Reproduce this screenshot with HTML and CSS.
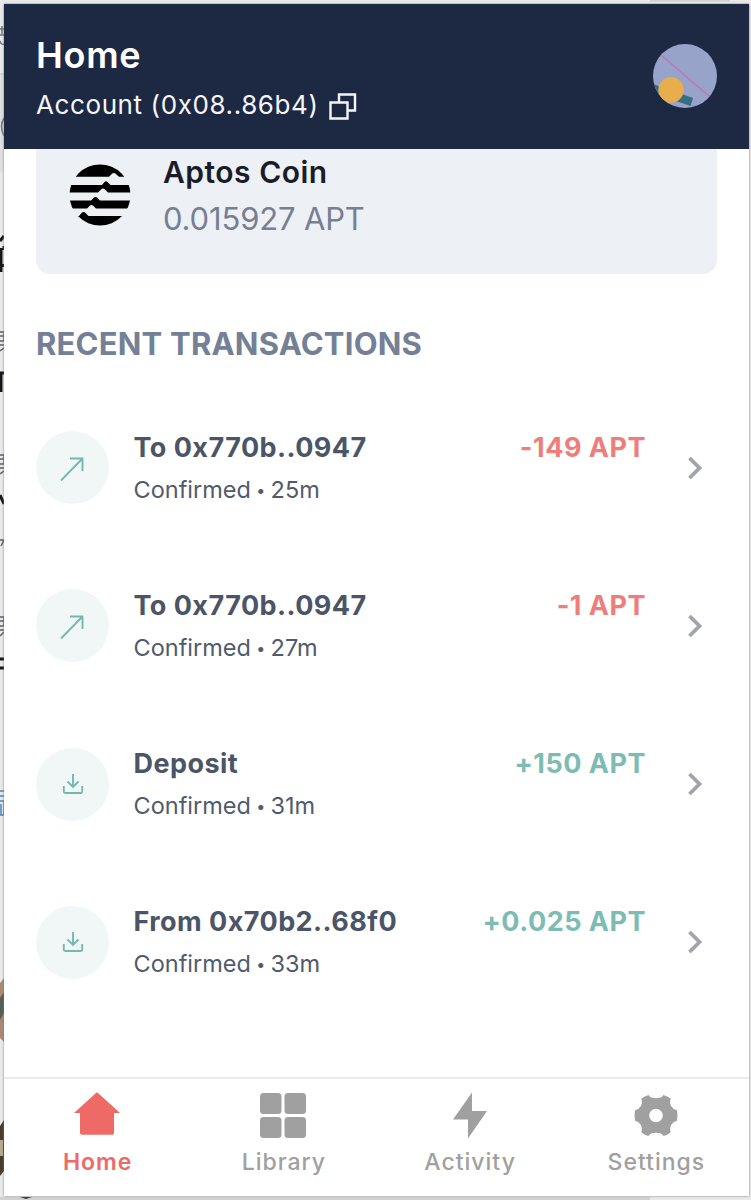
FILE: index.html
```
<!DOCTYPE html>
<html lang="en">
<head>
<meta charset="utf-8">
<title>Wallet</title>
<link rel="stylesheet" href="styles.css">
</head>
<body>
<svg class="backdrop" width="751" height="1200" viewBox="0 0 751 1200" aria-hidden="true">
  <path fill="#e9e9e9" d="M0 0H751V1200H0z"/>
  <path fill="#dedfe1" d="M0 75H4V172H0z"/>
  <path fill="#d2d2d2" d="M0 73H4V75H0zM650 0H730V1.500H650zM0 1197H650V1200H0z"/>
  <path stroke="#6c7078" stroke-width="1.500" fill="none" d="M0 29H4M2 26V34M0 35H4M0 41q1 4 4 3M4 118q-5 8 0 18"/>
  <path stroke="#16161a" stroke-width="3" fill="none" d="M0 241L4 236M1 248V272M4 246V250M3 264V267M0 373H4M1 373V392M0 495L4 504M0 659H4M4 668H0"/>
  <path stroke="#596069" stroke-width="1.500" fill="none" d="M0 332H4V341H0M0 336H4M0 345H4M0 351L4 348M0 455H4V464H0M0 459H4M0 468H4M0 474L4 471M0 617H4V626H0M0 621H4M0 630H4M0 636L4 632M0 540H4L1 546"/>
  <path stroke="#4c83c6" stroke-width="1.500" fill="none" d="M0 791H4M0 796H4M0 801H4V815H0M1 804V815"/>
  <path fill="#ad8973" d="M0 983L4 978V1042L0 1038z"/>
  <path fill="#555f57" d="M0 998L4 992V1013L0 1020z"/>
  <path fill="#493d2e" d="M0 1126L4 1120V1171L0 1176z"/>
  <path fill="#b9a890" d="M0 1140H3V1156H0z"/>
  <path fill="#42372d" d="M20 1197H32L26 1199z"/>
</svg>
<div class="app">
  <header class="header">
    <div class="heading">
      <h1 class="title">Home</h1>
      <div class="account"><span>Account (0x08..86b4)</span>
        <svg class="copy" width="28" height="28" viewBox="0 0 28 28" fill="none" stroke="#f4f6fa" stroke-width="2.400"><path d="M10 10V2.500H26V18.500H19M1.500 10.500H18.500V26.500H1.500z"/></svg>
      </div>
    </div>
    <svg class="avatar" width="64" height="64" viewBox="0 0 64 64">
      <defs><clipPath id="disc"><circle cx="32" cy="32" r="32"/></clipPath></defs>
      <g clip-path="url(#disc)"><path fill="#98a3c9" d="M0 0H64V64H0z"/><path stroke="#bd77b6" stroke-width="1.600" d="M8 11L57 53"/><path fill="#356f80" d="M0 40L40 54L37.500 62L0 49z"/><circle cx="18" cy="46" r="12.700" fill="#e8ae4b"/></g>
    </svg>
  </header>
  <main class="content">
    <section class="coin">
      <svg class="coin-logo" width="62" height="62" viewBox="0 0 62 62">
        <defs><clipPath id="coin"><circle cx="31" cy="31" r="30.500"/></clipPath></defs>
        <g clip-path="url(#coin)"><path d="M0 0H62V12.700H50L46 9.300Q44.500 8.500 43 9.800L40 12.700H0z M0 21H33L35.500 18Q37 16.700 38.500 18L41.500 21H62V28.500H39L35.500 25Q34 24 32.500 25L29 28.500H0z M0 36.500H22L25 33.500Q26.500 32.500 28 33.500L31 36.500H62V44.500H27L24 41.500Q22.500 40.500 21 41.500L18 44.500H0z M0 52H10L13 48.500Q14.500 47.500 16 48.500L19.500 52H62V62H0z"/></g>
      </svg>
      <div>
        <h2 class="coin-name">Aptos Coin</h2>
        <p class="coin-balance">0.015927 APT</p>
      </div>
    </section>
    <h2 class="section-title">RECENT TRANSACTIONS</h2>
    <ul class="transactions">
      <li class="row"><span class="badge"><svg class="send" width="26" height="26" viewBox="0 0 26 26"><path d="M2 24.500L23.500 2.500M11 2.500H23.500V15"/></svg></span><div class="info"><div class="line"><b>To 0x770b..0947</b><b class="out">-149 APT</b></div><p class="status">Confirmed <i>•</i> 25m</p></div><svg class="chevron" width="16" height="24" viewBox="0 0 16 24"><path d="M2.500 2L12.500 12L2.500 22"/></svg></li>
      <li class="row"><span class="badge"><svg class="send" width="26" height="26" viewBox="0 0 26 26"><path d="M2 24.500L23.500 2.500M11 2.500H23.500V15"/></svg></span><div class="info"><div class="line"><b>To 0x770b..0947</b><b class="out">-1 APT</b></div><p class="status">Confirmed <i>•</i> 27m</p></div><svg class="chevron" width="16" height="24" viewBox="0 0 16 24"><path d="M2.500 2L12.500 12L2.500 22"/></svg></li>
      <li class="row"><span class="badge"><svg width="22" height="22" viewBox="0 0 22 22"><path d="M11 1V14M5.500 8.500L11 14L16.500 8.500M1.800 13V18.500Q1.800 20 3.300 20H18.700Q20.200 20 20.200 18.500V13"/></svg></span><div class="info"><div class="line"><b>Deposit</b><b class="in">+150 APT</b></div><p class="status">Confirmed <i>•</i> 31m</p></div><svg class="chevron" width="16" height="24" viewBox="0 0 16 24"><path d="M2.500 2L12.500 12L2.500 22"/></svg></li>
      <li class="row"><span class="badge"><svg width="22" height="22" viewBox="0 0 22 22"><path d="M11 1V14M5.500 8.500L11 14L16.500 8.500M1.800 13V18.500Q1.800 20 3.300 20H18.700Q20.200 20 20.200 18.500V13"/></svg></span><div class="info"><div class="line"><b>From 0x70b2..68f0</b><b class="in">+0.025 APT</b></div><p class="status">Confirmed <i>•</i> 33m</p></div><svg class="chevron" width="16" height="24" viewBox="0 0 16 24"><path d="M2.500 2L12.500 12L2.500 22"/></svg></li>
    </ul>
  </main>
  <nav class="tabs">
    <a class="tab active"><svg width="48" height="48" viewBox="0 0 48 48"><path d="M22.700 2.200Q24 1 25.300 2.200L47 22H41V42Q41 43.700 39.300 43.700H8.700Q7 43.700 7 42V22H1z"/></svg><span>Home</span></a>
    <a class="tab"><svg width="48" height="48" viewBox="0 0 48 48"><rect x="1" y="2" width="21.500" height="21" rx="3.500"/><rect x="25.500" y="2" width="21.500" height="21" rx="3.500"/><rect x="1" y="26" width="21.500" height="21" rx="3.500"/><rect x="25.500" y="26" width="21.500" height="21" rx="3.500"/></svg><span>Library</span></a>
    <a class="tab"><svg width="48" height="48" viewBox="0 0 48 48"><path d="M26 1.500V20H41L22 47.500V28.500H7z"/></svg><span>Activity</span></a>
    <a class="tab"><svg width="48" height="48" viewBox="0 0 48 48"><path fill-rule="evenodd" d="M16.500 4Q18.500 7.300 24 7.300T31.500 4Q35.500 5 38.500 7.500Q37.500 12 39 15Q41 18.500 45 19.300Q46 24.500 45 29.700Q41 30.500 39 34Q37.500 37 38.500 41.500Q35.500 44 31.500 45Q29.500 41.700 24 41.700T16.500 45Q12.500 44 9.500 41.500Q10.500 37 9 34Q7 30.500 3 29.700Q2 24.500 3 19.300Q7 18.500 9 15Q10.500 12 9.500 7.500Q12.500 5 16.500 4ZM24 17.700A6.800 6.800 0 1 0 24 31.300A6.800 6.800 0 1 0 24 17.700Z"/></svg><span>Settings</span></a>
  </nav>
</div>
</body>
</html>
```
FILE: styles.css
```
* { box-sizing: border-box; }
body { margin: 0; width: 751px; height: 1200px; padding: 4px 2px 4px 4px; overflow: hidden; position: relative; font-family: Inter, sans-serif; }
h1, h2, p, ul { margin: 0; padding: 0; }
svg { display: block; flex: none; }
.backdrop { position: absolute; left: 0; top: 0; z-index: -1; }
.app { height: 1192px; display: flex; flex-direction: column; background: #fff; box-shadow: 0 0 2px #777; }
.header { height: 145px; flex: none; display: flex; justify-content: space-between; background: #1d2943; color: #fff; padding: 30px 32px 0; }
.title { font-size: 36px; line-height: 43px; font-weight: 600; letter-spacing: 0.700px; }
.account { display: flex; align-items: center; margin-top: 10px; font-size: 26px; line-height: 36px; letter-spacing: 0.600px; color: #f4f6fa; }
.copy { margin: 2px 0 0 10px; }
.avatar { margin-top: 9.500px; }
.content { flex: 1; padding: 0 32px; }
.coin { height: 125px; display: flex; background: #edf0f5; border-radius: 0 0 14px 14px; padding: 0 33px; gap: 32px; }
.coin-logo { margin-top: 15px; }
.coin-name { margin-top: 4px; font-size: 30px; line-height: 38px; font-weight: 600; letter-spacing: 0.500px; color: #1a1d29; }
.coin-balance { margin-top: 9px; font-size: 31px; line-height: 38px; letter-spacing: -0.150px; color: #777f94; }
.section-title { margin-top: 50px; font-size: 31px; line-height: 40px; font-weight: 700; letter-spacing: 0.200px; color: #748096; }
.transactions { list-style: none; margin-top: 24.700px; }
.row { height: 158.200px; display: flex; align-items: center; }
.badge { width: 73px; height: 73px; border-radius: 50%; background: #f1f7f7; display: flex; align-items: center; justify-content: center; flex: none; }
.badge path { fill: none; stroke: #75b9ae; stroke-width: 1.900; }
.badge .send { margin: 2px 2px 0 0; }
.info { flex: 1; margin-left: 24.500px; }
.line { display: flex; justify-content: space-between; font-size: 27px; line-height: 36px; letter-spacing: 0.450px; color: #4b5568; }
.line b { font-weight: 700; }
.line .out, .line .in { letter-spacing: 0.500px; margin-right: -1px; }
.line .out { color: #ed7e7c; }
.line .in { color: #7dbcb3; }
.status { margin-top: 8px; font-size: 23.500px; line-height: 32px; word-spacing: -1.300px; color: #505b6c; }
.status i { font-style: normal; font-size: 16px; line-height: 1; vertical-align: 2px; }
.chevron { margin-left: 42px; margin-right: 14px; }
.chevron path { fill: none; stroke: #a0a5ac; stroke-width: 3.800; }
.tabs { height: 119px; flex: none; border-top: 2px solid #ebebeb; display: grid; grid-template-columns: repeat(4, 1fr); }
.tab { display: flex; flex-direction: column; align-items: center; padding-top: 12px; font-size: 23px; line-height: 30px; font-weight: 500; letter-spacing: 1px; color: #a0a0a0; }
.tab span { margin-right: -1px; }
.tab svg { fill: #a0a0a0; margin-bottom: 8px; }
.active { color: #ee6a66; font-weight: 600; }
.active svg { fill: #ee6a66; }
```
